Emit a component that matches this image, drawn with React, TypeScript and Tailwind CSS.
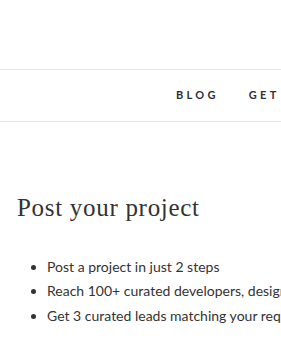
import React from "react";

const navItems = ["Blog", "Get started"];

const points = [
    "Post a project in just 2 steps",
    "Reach 100+ curated developers, designers and agencies",
    "Get 3 curated leads matching your requirements",
];

const App: React.FC = () => {
    return (
        <div className="w-[281px] h-[344px] overflow-hidden bg-white text-[#333]">
            <div className="h-[69px]" />
            <nav className="h-[53px] border-y border-[#e6e6e6] flex items-center pl-[176px] gap-[30px] whitespace-nowrap font-['Lato',sans-serif] font-bold text-[11px] tracking-[3.3px] uppercase text-[#2f2f3a]">
                {navItems.map((item) => (
                    <a key={item} href="#" className="shrink-0">
                        {item}
                    </a>
                ))}
            </nav>
            <main className="px-[17px] whitespace-nowrap">
                <h2 className="mt-[72px] font-['Liberation_Serif',serif] text-[25px] leading-[1.15] tracking-[0.7px] text-[#333]">
                    Post your project
                </h2>
                <ul className="mt-[32px] pl-[30px] list-disc font-['Lato',sans-serif] text-[14px] leading-[24.4px] text-[#333]">
                    {points.map((p) => (
                        <li key={p}>{p}</li>
                    ))}
                </ul>
            </main>
        </div>
    );
};

export default App;
